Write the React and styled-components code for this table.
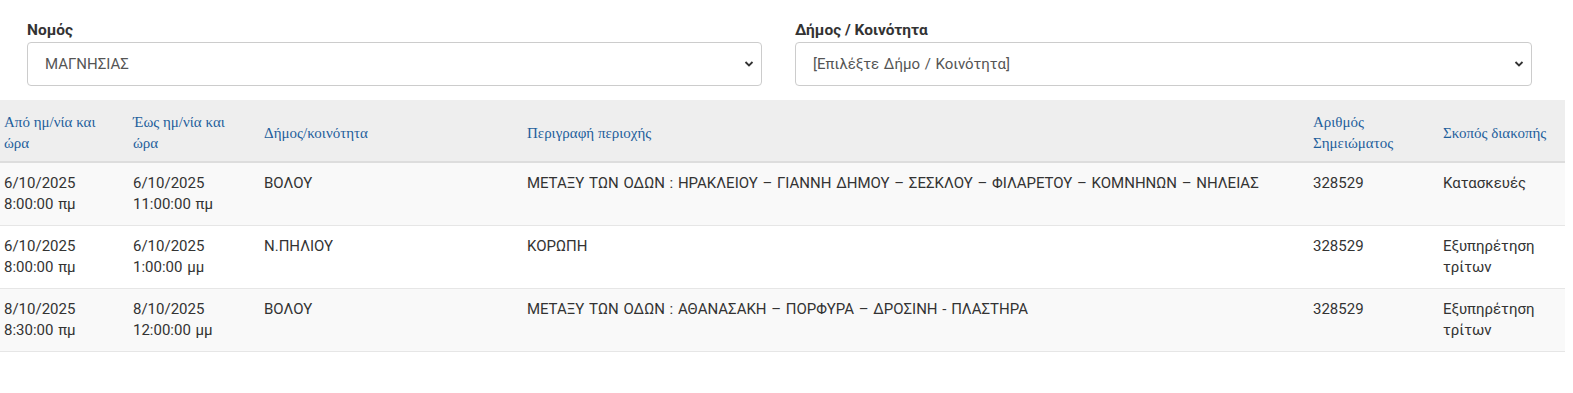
import styled, { createGlobalStyle } from "styled-components"

const Global = createGlobalStyle`
body {
    margin: 0;
    background: #fff;
    font-family: Roboto, "Noto Sans", sans-serif;
    color: #333;
}
`

const Page = styled.div`
width: 1573px;
padding-top: 20px;
`

const Filters = styled.div`
display: grid;
grid-template-columns: 735px 737px;
column-gap: 33px;
padding-left: 27px;
margin-bottom: 14px;
`

const Field = styled.div`
display: flex;
flex-direction: column;
gap: 2px;

label {
    font-size: 15.5px;
    font-weight: bold;
    line-height: 20px;
    color: #333;
}
`

const SelectWrap = styled.div`
position: relative;

select {
    width: 100%;
    height: 44px;
    box-sizing: border-box;
    border: 1px solid #ccc;
    border-radius: 4px;
    padding: 0 17px;
    font-family: Roboto, sans-serif;
    font-size: 15px;
    word-spacing: 1px;
    color: #555;
    background: #fff;
    appearance: none;
}

svg {
    position: absolute;
    right: 8px;
    top: 18px;
    pointer-events: none;
}
`

const Table = styled.table`
width: 1565px;
table-layout: fixed;
border-collapse: collapse;
font-size: 15px;
line-height: 21px;
word-spacing: 1px;

th {
    background: #eee;
    font-family: "Liberation Serif", "DejaVu Serif", serif;
    font-weight: normal;
    font-size: 15px;
    word-spacing: 0;
    color: #1f5f9c;
    text-align: left;
    vertical-align: middle;
    padding: 12px 4px 7px 4px;
    border-bottom: 2px solid #ddd;
}

td {
    vertical-align: top;
    padding: 10px 4px;
    border-top: 1px solid #e6e6e6;
    color: #333;
}

tbody tr:nth-child(odd) td {
    background: #f9f9f9;
}

tbody tr:last-child td {
    border-bottom: 1px solid #e6e6e6;
}
`

const Chevron = () => (
    <svg width="10" height="8" viewBox="0 0 10 8">
        <path d="M1.5 2 L5 5.5 L8.5 2" fill="none" stroke="#333" strokeWidth="1.8" />
    </svg>
)

const rows = [
    ["6/10/2025\n8:00:00 πμ", "6/10/2025\n11:00:00 πμ", "ΒΟΛΟΥ", "ΜΕΤΑΞΥ ΤΩΝ ΟΔΩΝ : ΗΡΑΚΛΕΙΟΥ – ΓΙΑΝΝΗ ΔΗΜΟΥ – ΣΕΣΚΛΟΥ – ΦΙΛΑΡΕΤΟΥ – ΚΟΜΝΗΝΩΝ – ΝΗΛΕΙΑΣ", "328529", "Κατασκευές"],
    ["6/10/2025\n8:00:00 πμ", "6/10/2025\n1:00:00 μμ", "Ν.ΠΗΛΙΟΥ", "ΚΟΡΩΠΗ", "328529", "Εξυπηρέτηση\nτρίτων"],
    ["8/10/2025\n8:30:00 πμ", "8/10/2025\n12:00:00 μμ", "ΒΟΛΟΥ", "ΜΕΤΑΞΥ ΤΩΝ ΟΔΩΝ : ΑΘΑΝΑΣΑΚΗ – ΠΟΡΦΥΡΑ – ΔΡΟΣΙΝΗ - ΠΛΑΣΤΗΡΑ", "328529", "Εξυπηρέτηση\nτρίτων"],
]

const widths = [129, 131, 263, 786, 130, 126]

function Cell({ text }) {
    const parts = text.split("\n")
    return <td>{parts.map((p, i) => <span key={i}>{p}{i < parts.length - 1 && <br />}</span>)}</td>
}

export default function App() {
    return <Page>
        <Global />
        <Filters>
            <Field>
                <label>Νομός</label>
                <SelectWrap>
                    <select defaultValue="mag">
                        <option value="mag">ΜΑΓΝΗΣΙΑΣ</option>
                    </select>
                    <Chevron />
                </SelectWrap>
            </Field>
            <Field>
                <label>Δήμος / Κοινότητα</label>
                <SelectWrap>
                    <select defaultValue="">
                        <option value="">[Επιλέξτε Δήμο / Κοινότητα]</option>
                    </select>
                    <Chevron />
                </SelectWrap>
            </Field>
        </Filters>

        <Table>
            <colgroup>
                {widths.map((w, i) => <col key={i} style={{ width: w }} />)}
            </colgroup>
            <thead>
                <tr>
                    <th>Από ημ/νία και<br />ώρα</th>
                    <th>Έως ημ/νία και<br />ώρα</th>
                    <th>Δήμος/κοινότητα</th>
                    <th>Περιγραφή περιοχής</th>
                    <th>Αριθμός<br />Σημειώματος</th>
                    <th>Σκοπός διακοπής</th>
                </tr>
            </thead>
            <tbody>
                {rows.map((r, i) => (
                    <tr key={i}>
                        {r.map((c, j) => <Cell key={j} text={c} />)}
                    </tr>
                ))}
            </tbody>
        </Table>
    </Page>
}
